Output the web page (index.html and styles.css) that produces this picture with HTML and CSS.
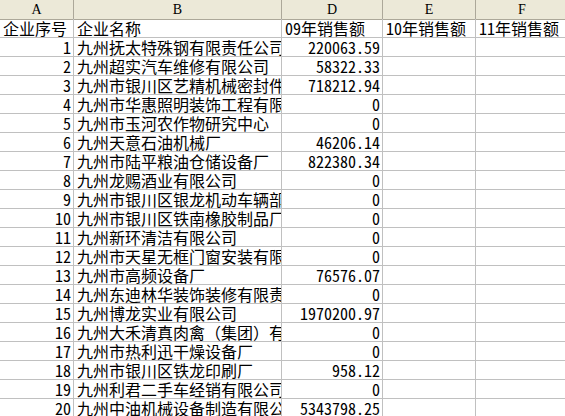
FILE: index.html
```html
<!DOCTYPE html>
<html lang="zh">
<head>
<meta charset="utf-8">
<link rel="stylesheet" href="styles.css">
</head>
<body>
<div class="sheet">
  <div class="hd">A</div><div class="hd">B</div><div class="hd">D</div><div class="hd">E</div><div class="hd">F</div>

  <div class="c t">企业序号</div><div class="c t">企业名称</div><div class="c t"><span class="num">09</span>年销售额</div><div class="c t"><span class="num">10</span>年销售额</div><div class="c t"><span class="num">11</span>年销售额</div>

  <div class="c n">1</div><div class="c t">九州抚太特殊钢有限责任公司</div><div class="c n">220063.59</div><div class="c"></div><div class="c"></div>
  <div class="c n">2</div><div class="c t">九州超实汽车维修有限公司</div><div class="c n">58322.33</div><div class="c"></div><div class="c"></div>
  <div class="c n">3</div><div class="c t">九州市银川区艺精机械密封件厂</div><div class="c n">718212.94</div><div class="c"></div><div class="c"></div>
  <div class="c n">4</div><div class="c t">九州市华惠照明装饰工程有限公司</div><div class="c n">0</div><div class="c"></div><div class="c"></div>
  <div class="c n">5</div><div class="c t">九州市玉河农作物研究中心</div><div class="c n">0</div><div class="c"></div><div class="c"></div>
  <div class="c n">6</div><div class="c t">九州天意石油机械厂</div><div class="c n">46206.14</div><div class="c"></div><div class="c"></div>
  <div class="c n">7</div><div class="c t">九州市陆平粮油仓储设备厂</div><div class="c n">822380.34</div><div class="c"></div><div class="c"></div>
  <div class="c n">8</div><div class="c t">九州龙赐酒业有限公司</div><div class="c n">0</div><div class="c"></div><div class="c"></div>
  <div class="c n">9</div><div class="c t">九州市银川区银龙机动车辆部</div><div class="c n">0</div><div class="c"></div><div class="c"></div>
  <div class="c n">10</div><div class="c t">九州市银川区铁南橡胶制品厂</div><div class="c n">0</div><div class="c"></div><div class="c"></div>
  <div class="c n">11</div><div class="c t">九州新环清洁有限公司</div><div class="c n">0</div><div class="c"></div><div class="c"></div>
  <div class="c n">12</div><div class="c t">九州市天星无框门窗安装有限公司</div><div class="c n">0</div><div class="c"></div><div class="c"></div>
  <div class="c n">13</div><div class="c t">九州市高频设备厂</div><div class="c n">76576.07</div><div class="c"></div><div class="c"></div>
  <div class="c n">14</div><div class="c t">九州东迪林华装饰装修有限责任公司</div><div class="c n">0</div><div class="c"></div><div class="c"></div>
  <div class="c n">15</div><div class="c t">九州博龙实业有限公司</div><div class="c n">1970200.97</div><div class="c"></div><div class="c"></div>
  <div class="c n">16</div><div class="c t">九州大禾清真肉禽（集团）有限公司</div><div class="c n">0</div><div class="c"></div><div class="c"></div>
  <div class="c n">17</div><div class="c t">九州市热利迅干燥设备厂</div><div class="c n">0</div><div class="c"></div><div class="c"></div>
  <div class="c n">18</div><div class="c t">九州市银川区铁龙印刷厂</div><div class="c n">958.12</div><div class="c"></div><div class="c"></div>
  <div class="c n">19</div><div class="c t">九州利君二手车经销有限公司</div><div class="c n">0</div><div class="c"></div><div class="c"></div>
  <div class="c n">20</div><div class="c t">九州中油机械设备制造有限公司</div><div class="c n">5343798.25</div><div class="c"></div><div class="c"></div>
</div>
</body>
</html>
```
FILE: styles.css
```css
html, body {
  margin: 0;
  padding: 0;
  background: #ffffff;
  overflow: hidden;
  width: 565px;
  height: 416px;
}
.sheet {
  display: grid;
  grid-template-columns: 74px 208px 101px 93px 93px;
  grid-auto-rows: 19px;
  width: 569px;
  font-family: "Noto Sans Mono CJK SC", "Noto Sans CJK SC", sans-serif;
  font-size: 16px;
  color: #000;
}
.hd {
  box-sizing: border-box;
  height: 20px;
  margin-bottom: -1px;
  background: #ece9d8;
  border-right: 1px solid #aca899;
  border-bottom: 1px solid #aca899;
  font-family: "Liberation Serif", serif;
  font-size: 14px;
  line-height: 19px;
  text-align: center;
}
.c {
  box-sizing: border-box;
  height: 19px;
  border-right: 1px solid #c0c0c0;
  border-bottom: 1px solid #c0c0c0;
  line-height: 18px;
  white-space: nowrap;
  overflow-x: clip;
  overflow-y: visible;
}
.t {
  padding-left: 3px;
}
.n {
  text-align: right;
  padding-right: 2px;
}
.num {
  font-family: "Noto Sans Mono CJK SC", "Liberation Mono", monospace;
}
```
